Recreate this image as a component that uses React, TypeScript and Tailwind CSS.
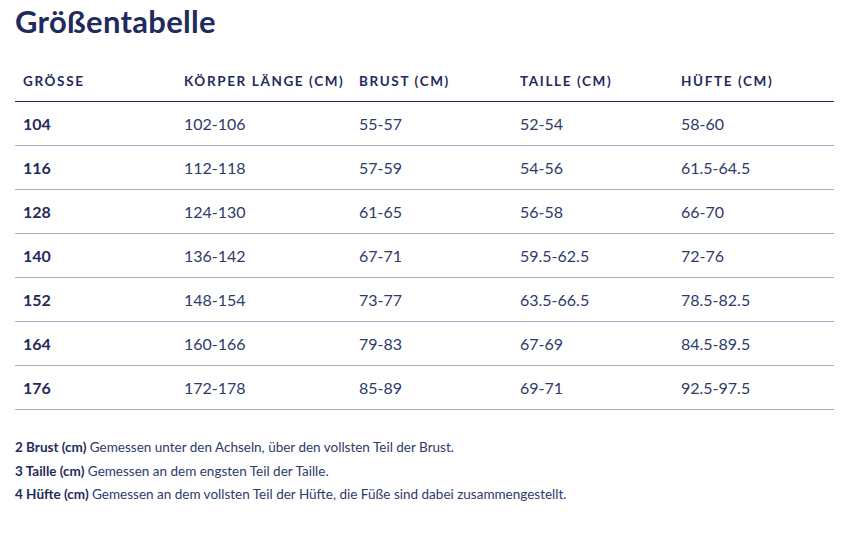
const rows = [
  ["104", "102-106", "55-57", "52-54", "58-60"],
  ["116", "112-118", "57-59", "54-56", "61.5-64.5"],
  ["128", "124-130", "61-65", "56-58", "66-70"],
  ["140", "136-142", "67-71", "59.5-62.5", "72-76"],
  ["152", "148-154", "73-77", "63.5-66.5", "78.5-82.5"],
  ["164", "160-166", "79-83", "67-69", "84.5-89.5"],
  ["176", "172-178", "85-89", "69-71", "92.5-97.5"],
];

const headers = ["GRÖSSE", "KÖRPER LÄNGE (CM)", "BRUST (CM)", "TAILLE (CM)", "HÜFTE (CM)"];

const cols = "grid grid-cols-[161px_175px_161px_161px_161px]";

export default function App() {
  return (
    <div className="bg-white w-[868px] h-[533px] px-[15px] text-[#1f2b5c] font-['Lato','Noto_Sans',sans-serif]">
      <h1 className="h-[40px] text-[31px] leading-[42px] font-bold tracking-[0.3px]">Größentabelle</h1>

      {/* Tabelle */}
      <div className="mt-[21px] w-[819px]">
        <div className={`${cols} h-[41px] items-center border-b-[1.5px] border-[#1f2b5c]`}>
          {headers.map((h) => (
            <div key={h} className="pl-[8px] pt-[1px] text-[13.5px] font-bold tracking-[0.12em]">
              {h}
            </div>
          ))}
        </div>
        {rows.map((r) => (
          <div key={r[0]} className={`${cols} h-[44px] items-center border-b border-[#a6aec8]`}>
            {r.map((c, i) => (
              <div
                key={i}
                className={
                  i === 0
                    ? "pl-[8px] text-[16px] font-bold"
                    : "pl-[8px] text-[16px] font-normal text-[#2e3a6a]"
                }
              >
                {c}
              </div>
            ))}
          </div>
        ))}
      </div>

      {/* Fußnoten */}
      <div className="mt-[26px] text-[13.5px] leading-[23.5px] text-[#2e3a6a]">
        <p>
          <b className="font-bold text-[#1f2b5c]">2 Brust (cm)</b> Gemessen unter den Achseln, über den vollsten Teil der Brust.
        </p>
        <p>
          <b className="font-bold text-[#1f2b5c]">3 Taille (cm)</b> Gemessen an dem engsten Teil der Taille.
        </p>
        <p>
          <b className="font-bold text-[#1f2b5c]">4 Hüfte (cm)</b> Gemessen an dem vollsten Teil der Hüfte, die Füße sind dabei zusammengestellt.
        </p>
      </div>
    </div>
  );
}
